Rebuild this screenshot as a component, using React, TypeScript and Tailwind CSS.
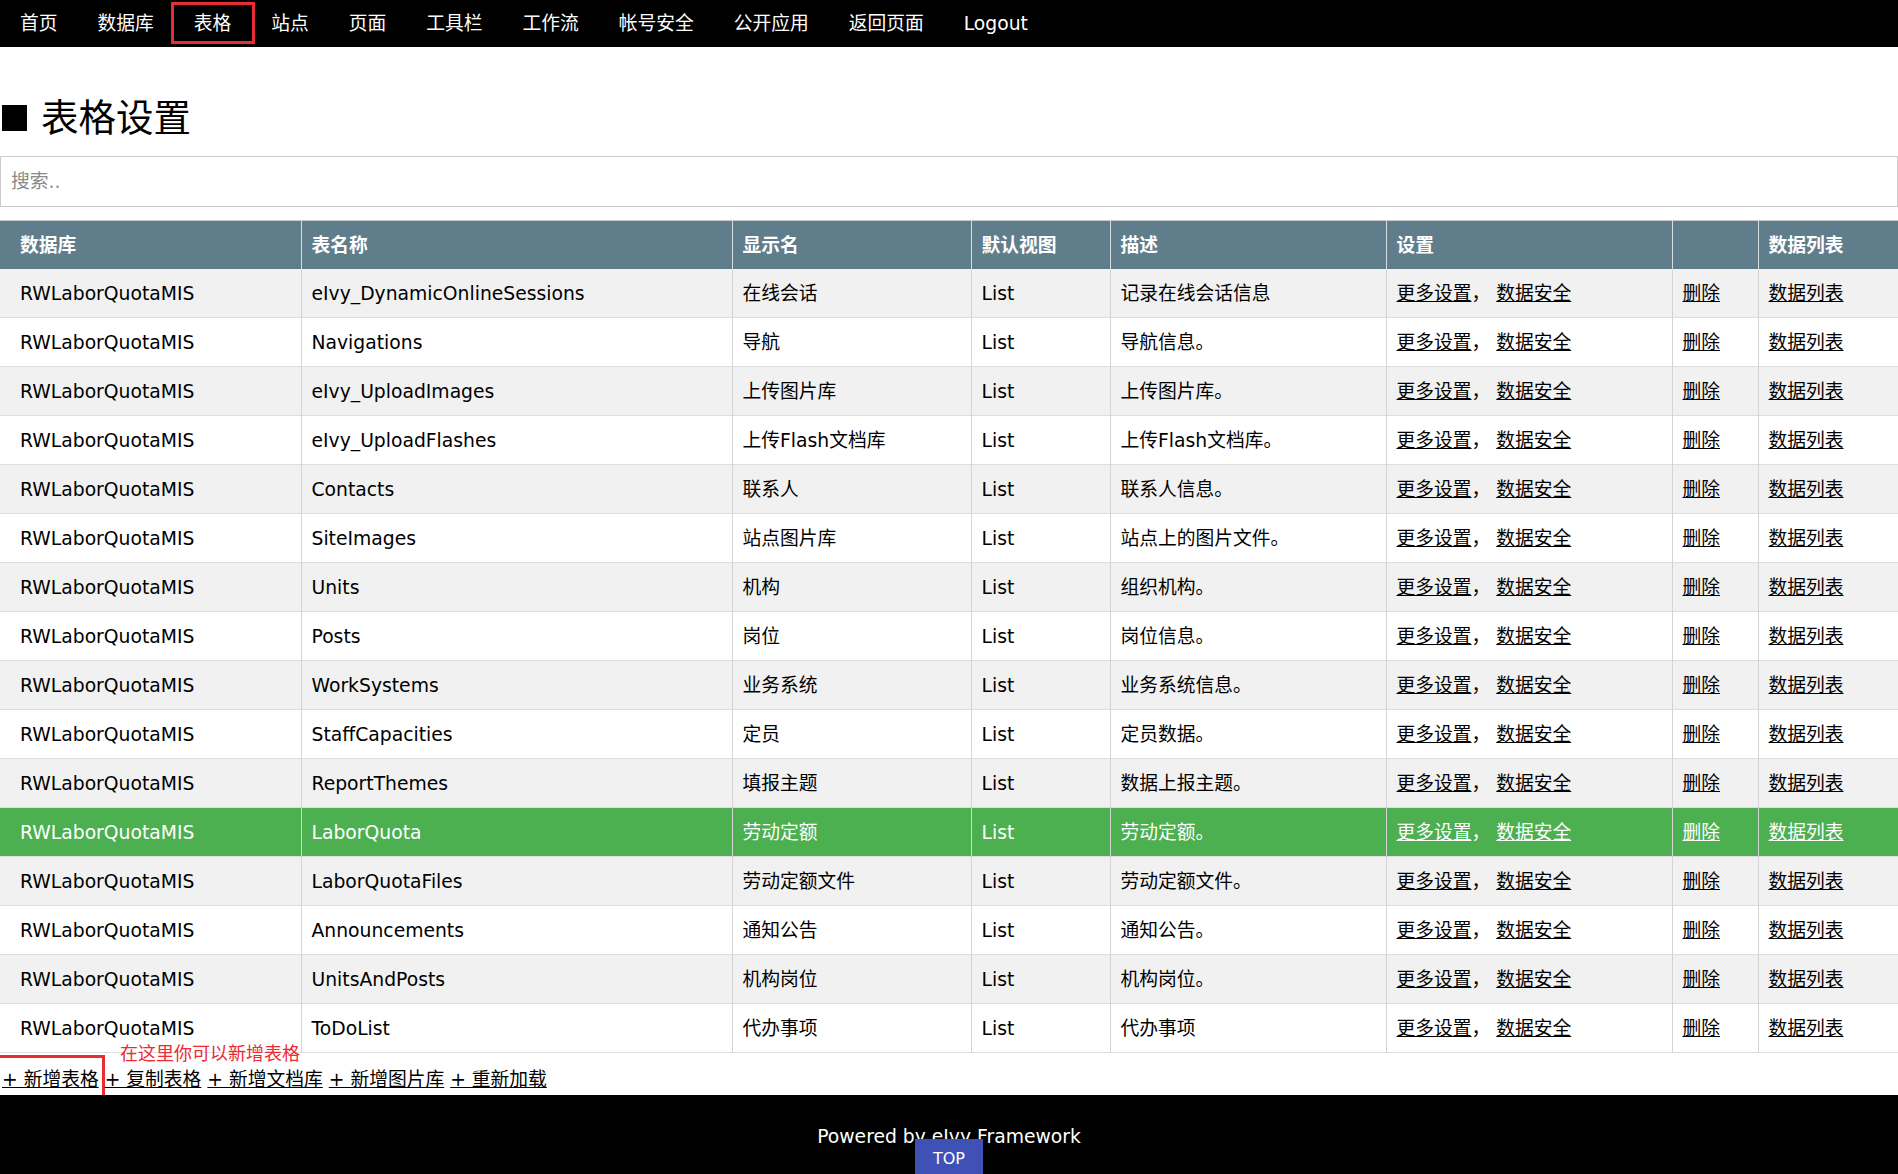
const navItems = ["首页", "数据库", "表格", "站点", "页面", "工具栏", "工作流", "帐号安全", "公开应用", "返回页面", "Logout"];

const rows: Array<[string, string, string]> = [
  ["eIvy_DynamicOnlineSessions", "在线会话", "记录在线会话信息"],
  ["Navigations", "导航", "导航信息。"],
  ["eIvy_UploadImages", "上传图片库", "上传图片库。"],
  ["eIvy_UploadFlashes", "上传Flash文档库", "上传Flash文档库。"],
  ["Contacts", "联系人", "联系人信息。"],
  ["SiteImages", "站点图片库", "站点上的图片文件。"],
  ["Units", "机构", "组织机构。"],
  ["Posts", "岗位", "岗位信息。"],
  ["WorkSystems", "业务系统", "业务系统信息。"],
  ["StaffCapacities", "定员", "定员数据。"],
  ["ReportThemes", "填报主题", "数据上报主题。"],
  ["LaborQuota", "劳动定额", "劳动定额。"],
  ["LaborQuotaFiles", "劳动定额文件", "劳动定额文件。"],
  ["Announcements", "通知公告", "通知公告。"],
  ["UnitsAndPosts", "机构岗位", "机构岗位。"],
  ["ToDoList", "代办事项", "代办事项"],
];

const headers = ["数据库", "表名称", "显示名", "默认视图", "描述", "设置", "", "数据列表"];
const widths = [301, 431, 239, 139, 276, 286, 86, 140];

const bottomLinks = ["+ 新增表格", "+ 复制表格", "+ 新增文档库", "+ 新增图片库", "+ 重新加载"];

export default function App() {
  return (
    <div
      className="relative min-h-[1174px] bg-white text-black text-[18.75px] leading-[28px]"
      style={{ fontFamily: '"DejaVu Sans", "Noto Sans CJK SC", sans-serif' }}
    >
      {/* top bar */}
      <div className="flex h-[47px] items-center bg-black text-white">
        {navItems.map((item) => (
          <a key={item} className="relative block px-5 leading-[47px]">
            {item}
            {item === "表格" && (
              <span className="absolute left-[-3px] right-[-4px] top-[2px] bottom-[3px] border-[3px] border-[#ea2d33]" />
            )}
          </a>
        ))}
      </div>

      <div className="pt-[43px]">
        <h2
          className="flex items-center text-[37.5px] leading-[56px] font-normal"
          style={{ fontFamily: '"Liberation Sans", "Noto Sans CJK SC", sans-serif' }}
        >
          <span className="ml-[2px] mr-[14px] inline-block h-[26px] w-[25px] bg-black" />
          表格设置
        </h2>
        <input
          className="mt-[10px] block h-[51px] w-full border border-[#ccc] px-[10px] outline-none placeholder:text-[#8a8a8a]"
          placeholder="搜索.."
        />

        <table className="mt-[13px] w-full table-fixed border-collapse border-t border-[#ccc]">
          <colgroup>
            {widths.map((w, i) => (
              <col key={i} style={{ width: w }} />
            ))}
          </colgroup>
          <thead>
            <tr className="h-[48px] bg-[#607d8b] text-white">
              {headers.map((h, i) => (
                <th
                  key={i}
                  className={`border-l border-[#d6dde0] pt-[2px] text-left font-bold ${i === 0 ? "pl-5 border-l-0" : "pl-[10px]"}`}
                >
                  {h}
                </th>
              ))}
            </tr>
          </thead>
          <tbody>
            {rows.map(([name, display, desc], idx) => {
              const green = name === "LaborQuota";
              const bg = green ? "bg-[#4caf50] text-white" : idx % 2 === 0 ? "bg-[#f1f1f1]" : "bg-white";
              const cell = "border-l border-[#d4d4d4] pl-[10px] pt-[2px] whitespace-nowrap";
              return (
                <tr key={name} className={`h-[49px] border-b border-[#dddddd] ${bg}`}>
                  <td className="pl-5 pt-[2px] whitespace-nowrap">RWLaborQuotaMIS</td>
                  <td className={cell}>{name}</td>
                  <td className={cell}>{display}</td>
                  <td className={cell}>List</td>
                  <td className={cell}>{desc}</td>
                  <td className={cell}>
                    <a className="underline">更多设置</a>， <a className="underline">数据安全</a>
                  </td>
                  <td className={cell}>
                    <a className="underline">删除</a>
                  </td>
                  <td className={cell}>
                    <a className="underline">数据列表</a>
                  </td>
                </tr>
              );
            })}
          </tbody>
        </table>

        {/* actions under the table */}
        <div className="relative flex h-[42px] items-end gap-[6px] pl-[2px] pb-[1px]">
          <span className="absolute left-[120px] top-[-11px] text-[18px] leading-[24px] text-[#ee2a33]">
            在这里你可以新增表格
          </span>
          {bottomLinks.map((l, i) => (
            <a key={l} className="relative underline">
              {l}
              {i === 0 && (
                <span className="absolute left-[-5px] right-[-6px] top-[-11px] bottom-[-6px] border-[3px] border-[#ea2d33]" />
              )}
            </a>
          ))}
        </div>
      </div>

      {/* footer */}
      <div className="relative z-0 h-[80px] bg-black pt-[28px] text-center text-white">
        Powered by eIvy Framework
        <span className="absolute left-1/2 top-[44px] flex h-[40px] w-[68px] -translate-x-1/2 items-center justify-center bg-[#3f51b5] text-[16px] text-white">
          TOP
        </span>
      </div>
    </div>
  );
}
